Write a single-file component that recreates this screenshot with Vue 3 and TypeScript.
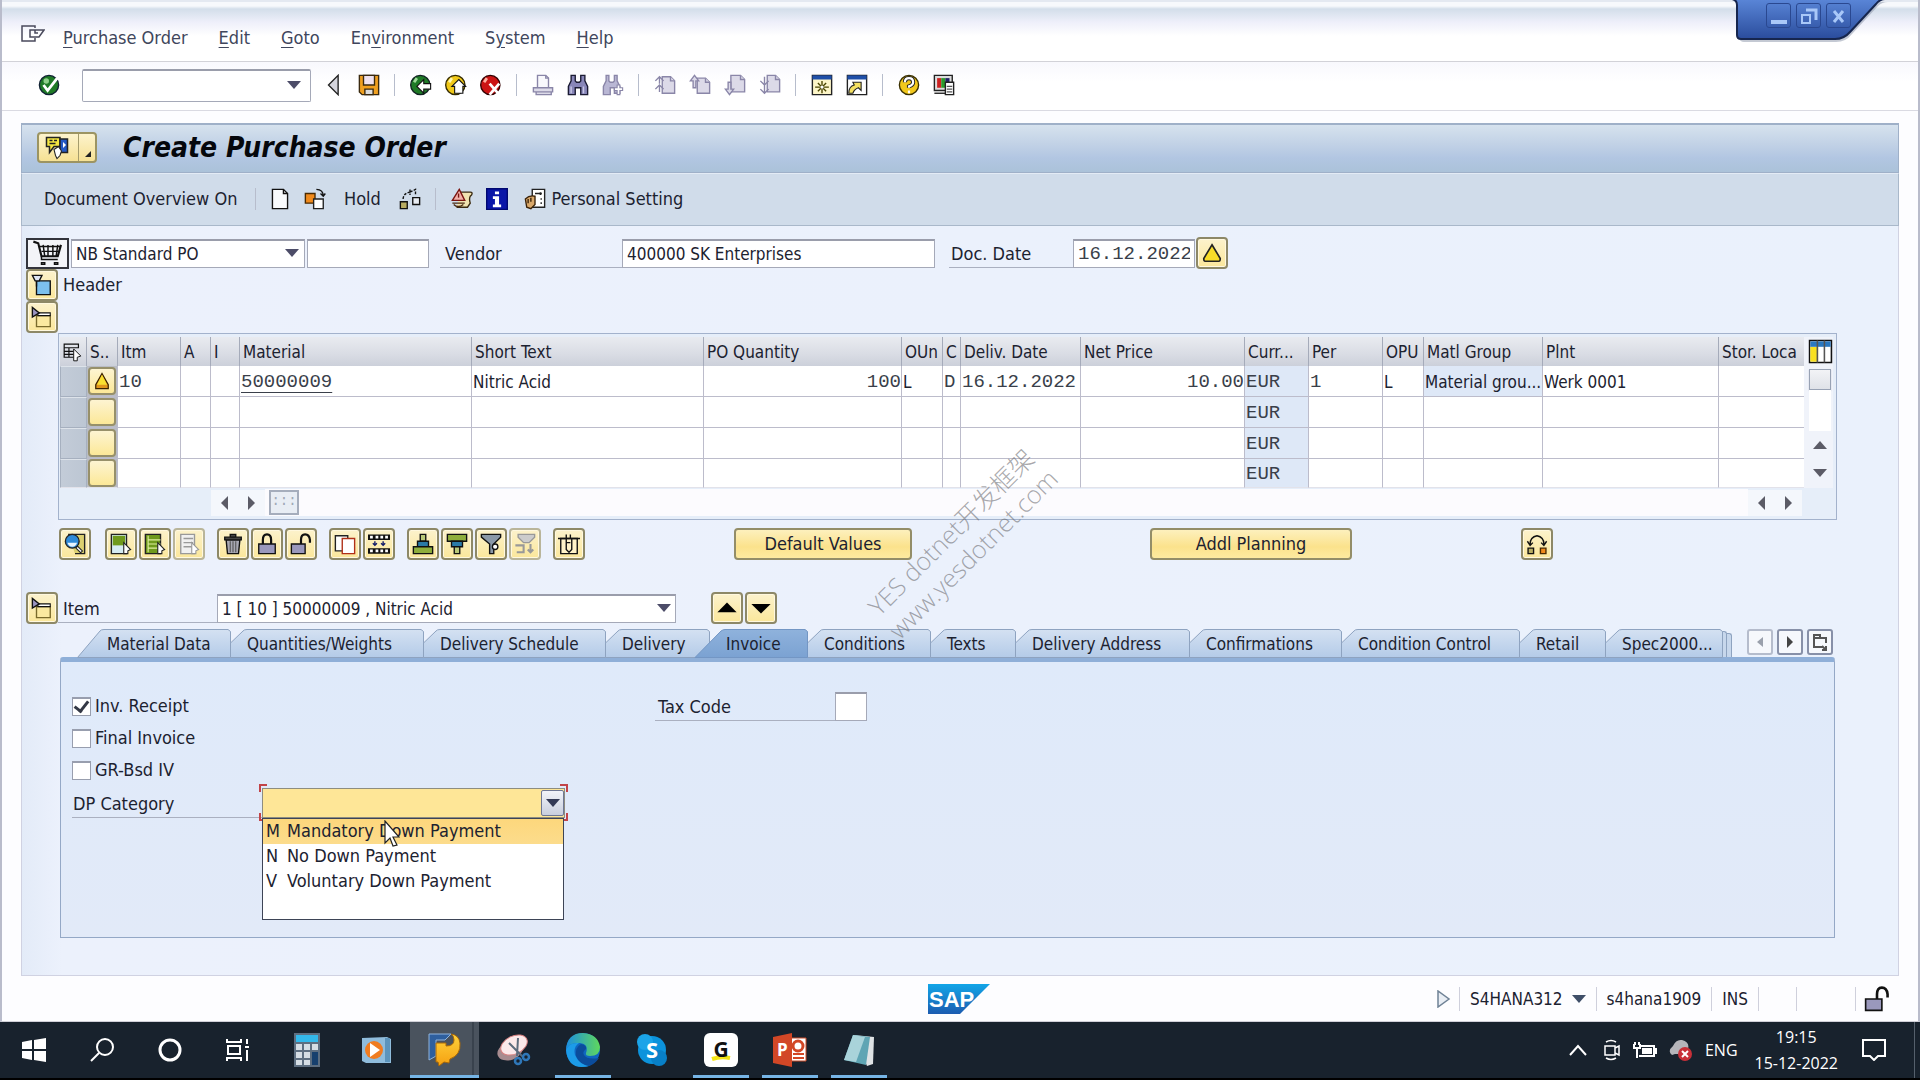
<script setup lang="ts">
import { ref } from 'vue'

interface Tool { icon: string; label: string; off?: boolean }
interface Column { name: string; width?: number }
interface Tab { name: string; width: number }

const g = 'stroke="#8a86a8" fill="#dcdae8"'
const k = 'stroke="#111" fill="none"'

const icons: Record<string, string> = {
  ok: `<circle cx="8" cy="8" r="7" fill="#1f7a26" stroke="#123"/><circle cx="6" cy="5" r="2" fill="#8fd08a"/><path d="M4 8l3 4 7-9" fill="none" stroke="#fff" stroke-width="2"/>`,
  prev: `<path d="M11 1v14L4 8z" fill="#d5d5dd" stroke="#222"/>`,
  save: `<path d="M1 1h14v14H3l-2-2z" fill="#f0a020" stroke="#3a2a10"/><path d="M4 1h8v7H4z" fill="#efe2ef" stroke="#3a2a10"/><path d="M5 11h6v4H5z" fill="#ddd" stroke="#3a2a10"/>`,
  back: `<circle cx="7.500" cy="8" r="7" fill="#1f7a26" stroke="#122"/><path d="M5 3l-2 3" stroke="#9fda9a" stroke-width="2"/><path d="M5 9l5-5v3h5v4h-5v3z" fill="#fff" stroke="#111" stroke-width=".8"/>`,
  exit: `<circle cx="7.500" cy="8" r="7" fill="#f0c818" stroke="#332a00"/><path d="M5 3l-2 3" stroke="#fff7b0" stroke-width="2"/><path d="M10 4l5 5h-2v5H7V9H5z" fill="#fff" stroke="#111" stroke-width=".8"/>`,
  cancel: `<circle cx="7.500" cy="8" r="7" fill="#cc1414" stroke="#300"/><path d="M5 3l-2 3" stroke="#ffb0a0" stroke-width="2"/><path d="M7 7l7 8M14 7l-7 8" stroke="#fff" stroke-width="2"/>`,
  print: `<path d="M4 10V1h6l2 2v7" fill="#f8f8fc" stroke="#8a86a8"/><path d="M10 1v2h2" fill="none" stroke="#8a86a8"/><path d="M1 10h14v3H1zM3 13h11v2H3z" ${g}/>`,
  find: `<path d="M3 1h3v4l1 1h2l1-1V1h3v4l2 4v6h-5v-5H6v5H1V9l2-4z" fill="#8886b8" stroke="#1b1b33"/><path d="M3 9v5M12 9v5" stroke="#c9c8e6"/>`,
  findnext: `<path d="M3 1h2v4l1 1h2l1-1V1h2v4l2 4v5H9v-4H6v5H1V9l2-4z" fill="#b9b7d4" stroke="#8a86a8"/><path d="M11 8h2v2h2v2h-2v3h-2v-3H9v-2h2z" fill="#fff" stroke="#8a86a8" stroke-width=".8"/>`,
  first: `<path d="M6 2h6l3 3v9H6z" ${g}/><path d="M12 2v3h3" ${g}/><path d="M1 5l3-3 3 3M4 2v5M1 11l3-3 3 3M4 8v5" fill="none" stroke="#8a86a8"/>`,
  pageup: `<path d="M6 3h6l3 3v8H6z" ${g}/><path d="M12 3v3h3" ${g}/><path d="M1 5l3-4 3 4H5v5H3V5z" ${g}/>`,
  pagedown: `<path d="M5 1h7l3 3v9H5z" ${g}/><path d="M12 1v3h3" ${g}/><path d="M1 11l3 4 3-4H5V6H3v5z" ${g}/>`,
  last: `<path d="M6 1h6l3 3v9H6z" ${g}/><path d="M12 1v3h3" ${g}/><path d="M1 5l3 3 3-3M4 2v5M1 11l3 3 3-3M4 8v6" fill="none" stroke="#8a86a8"/>`,
  session: `<path d="M1 1h14v14H1z" fill="#fdf6c8" stroke="#222"/><path d="M1 1h14v3H1z" fill="#1f4fa8"/><path d="M8 5v9M3 9.500h10M5 6.500l6 6M11 6.500l-6 6" stroke="#4a4500"/><circle cx="8" cy="9.500" r="1.200" fill="#fff"/>`,
  shortcut: `<path d="M1 1h14v14H1z" fill="#fff" stroke="#222"/><path d="M1 1h14v3H1z" fill="#1f4fa8"/><path d="M2 14q0-5 4-6L5 6h6v6L9 10q-3 1-4 4z" fill="#f4e060" stroke="#222" stroke-width=".8"/>`,
  help: `<circle cx="8" cy="8" r="7" fill="#f2c81c" stroke="#3a3000"/><path d="M5 6q0-3 3-3t3 3q0 2-3 3v1" fill="none" stroke="#222" stroke-width="3"/><path d="M5 6q0-3 3-3t3 3q0 2-3 3v1M8 12v2" fill="none" stroke="#fff" stroke-width="1.600"/>`,
  layout: `<path d="M1 1h13v11H1z" fill="#ddd" stroke="#222"/><path d="M3 3h3v7H3z" fill="#c22"/><path d="M6 3h3v7H6z" fill="#2a9a2a"/><path d="M9 3h3v7H9z" fill="#226"/><path d="M1 14h8" stroke="#222"/><path d="M9 6h6v9H9z" fill="#fff" stroke="#222"/><path d="M10 9h4M10 11h4M10 13h4" stroke="#555" stroke-width=".8"/>`,
  services: `<path d="M1 1h9v6H6l-3 4V7H1z" fill="#f5e642" stroke="#222"/><path d="M3 3h2M6 3h2M3 5h4" stroke="#222"/><path d="M10 2h5v9h-5z" fill="#2459c4" stroke="#222"/><path d="M12 4v4l2-2z" fill="#fff"/><path d="M6 9l3-2 2 3-1 3-2 2-1-2z" fill="#fff" stroke="#222" stroke-width=".7"/>`,
  create: `<path d="M2.500 1h8l3 3v11h-11z" fill="#f8fafc" stroke="#111"/><path d="M10.500 1v3h3" ${k}/>`,
  other: `<path d="M1 4h7v7H1z" fill="#f08a1c" stroke="#4a2a00"/><path d="M7 8h7v7H7z" fill="#fff" stroke="#222"/><path d="M9 1q5 0 5 5M12 4l2 2 1.500-2" ${k}/>`,
  hold: `<path d="M1 10h5v5H1z" fill="#b9ad62" stroke="#111"/><path d="M10 7h5v5h-5z" fill="#e8ecf2" stroke="#111"/><path d="M3 8q0-4 5-5M8 1v4M8 3l4-2v4" ${k} stroke-dasharray="2 1"/>`,
  check: `<path d="M7 3h7q2 0 1 2l-1 1q-1 2 0 5l-2 3H4" fill="#f1e3b0" stroke="#3a2a10"/><path d="M6 1l4 8H1z" fill="#f2b0a8" stroke="#7a1410"/><path d="M5.500 4v3" stroke="#7a1410"/><path d="M2 12q3 3 7 0M1 11h9" fill="none" stroke="#4a2a10"/>`,
  info: `<path d="M.5.5h15v15H.5z" fill="#0a16a8" stroke="#000870"/><path d="M6.500 2.500h3v2h-3zM5 6h4.500v6H11v2H5v-2h1.500V8H5z" fill="#fff"/>`,
  personal: `<path d="M6 1h9v13H6z" fill="#fff" stroke="#222"/><path d="M8 4h5M12 3v2M12 8h1M12 11h1" stroke="#222" stroke-width="1.200"/><path d="M1 8q3-3 7-2v6l-3 3-3-1z" fill="#d9a86a" stroke="#3a2208"/><path d="M3 8v3M5 7v3" stroke="#3a2208"/>`,
  cart: `<path d="M1 1l3 1 2 8h10l2-7" ${k} stroke-width="1.300"/><path d="M5 4h13M6 7h11M7 3l1 7M10 3v7M13 3v7M16 3l-1 7M6 10v2h10M6 14h2v1H6zM14 14h2v1h-2z" ${k} stroke-width=".9"/>`,
  expand: `<path d="M4 5h10v10H4z" fill="#7cc0ee" stroke="#111"/><path d="M1 1h7l-2 4H3zM4 5v4" fill="#dfe6f5" stroke="#111"/>`,
  collapse: `<path d="M4 7h10v8H4z" fill="#fbe9a0" stroke="#7a6a2a"/><path d="M5 5h9v2H5z" fill="#fff" stroke="#111" stroke-width=".8"/><path d="M1 1v7l5-3z" fill="#9a94c0" stroke="#111"/>`,
  warn: `<path d="M8 2l6 10q0 2-1 2H3q-1 0-1-2z" fill="#f8dc28" stroke="#222" stroke-width="1.200"/>`,
  warnsel: `<path d="M8 2l5 9v3H3v-3z" fill="#e0961c" stroke="#3a2200"/><path d="M8 3l4 8H4z" fill="#f8e030"/>`,
  detail: `<path d="M3 1h12v14H8" fill="#dcd070" stroke="#222"/><circle cx="6" cy="6" r="5" fill="#2f8ad8" stroke="#222"/><path d="M2.500 7h7q-1 3-3.500 3T2.500 7" fill="#e8f4ff"/><path d="M9 10l4 4" stroke="#222" stroke-width="2.600"/><path d="M9.500 10.500l3 3" stroke="#fff"/>`,
  selall: `<path d="M1 1h11v14H1z" fill="#d6ecf2" stroke="#222"/><path d="M2 2h9v7H2z" fill="#6f9a1c"/><path d="M10 7l5 5-2 1v2h-3z" fill="#fff" stroke="#222" stroke-width=".8"/>`,
  selblock: `<path d="M1 1h11v14H1z" fill="#6f9a1c" stroke="#222"/><path d="M3 5h9M3 8h9M3 11h9M3 2v12" stroke="#e0f0a0" stroke-width=".8"/><path d="M10 7l5 5-2 1v2h-3z" fill="#fff" stroke="#222" stroke-width=".8"/>`,
  deselect: `<path d="M2 1h10v14H2z" fill="#f0f0f0" stroke="#999"/><path d="M4 4h7M4 7h7M4 10h6" stroke="#999"/><path d="M10 7l5 5-2 1v2h-3z" fill="#fff" stroke="#999" stroke-width=".8"/>`,
  trash: `<path d="M3 5h10l-1 10H4z" fill="#a8a8b4" stroke="#111"/><path d="M6 6v8M8 6v8M10 6v8" stroke="#555" stroke-width=".8"/><path d="M2 3h12v2H2zM6 1h4v2H6z" fill="#444" stroke="#111"/>`,
  lock: `<path d="M2 8h12v7H2z" fill="#9a98bc" stroke="#111"/><path d="M5 8V5q0-4 3-4t3 4v3" ${k} stroke-width="1.600"/>`,
  unlock: `<path d="M1 8h10v7H1z" fill="#9a98bc" stroke="#111"/><path d="M8 8V5q0-4 3-4t3.500 4v2" ${k} stroke-width="1.600"/>`,
  copy: `<path d="M1 2h9v11H1z" fill="#fff" stroke="#222"/><path d="M6 4h9v11H6z" fill="#fff" stroke="#b03018"/>`,
  fill: `<path d="M0 1h16v4H0zM0 11h16v4H0z" fill="#111"/><path d="M1.500 2h2v2h-2zM5.500 2h2v2h-2zM9 2h2v2H9zM12.500 2h2v2h-2zM1.500 12h2v2h-2zM5.500 12h2v2h-2zM9 12h2v2H9zM12.500 12h2v2h-2z" fill="#fff"/><path d="M5 6v3M3.500 7.500L5 9l1.500-1.500M11 6v3M9.500 7.500L11 9l1.500-1.500" fill="none" stroke="#111b6a"/>`,
  asc: `<path d="M6 1h4v5H6z" fill="#b9c878" stroke="#111"/><path d="M4 6h8v4H4z" fill="#2a7aa8" stroke="#111"/><path d="M1 10h14v5H1z" fill="#8fae3c" stroke="#111"/>`,
  desc: `<path d="M1 1h14v5H1z" fill="#8fae3c" stroke="#111"/><path d="M4 6h8v4H4z" fill="#2a7aa8" stroke="#111"/><path d="M6 10h4v5H6z" fill="#b9c878" stroke="#111"/>`,
  filter: `<path d="M1 1h14v2l-5 5v7H7V8L1 3z" fill="#8a98a8" stroke="#111"/><circle cx="11" cy="10" r="2" fill="#fff" stroke="#111"/>`,
  nofilter: `<path d="M3 1h12v2l-4 4H7L3 3z" fill="#ccc" stroke="#999"/><path d="M1 9h6v5H2M12 8v6M10 12l2 2 2-2" fill="none" stroke="#999" stroke-width="1.500"/>`,
  basket: `<path d="M2 4h12v11H2z" fill="#fff3c8" stroke="#111"/><path d="M0 4h16M6 1v6M9 1v3M6 7l3 0M6 7v5l2 2 2-2V4" ${k}/>`,
  swap: `<path d="M1.500 11h4v4h-4z" fill="#b9ad62" stroke="#111"/><path d="M10.500 11h4v4h-4z" fill="#f08a1c" stroke="#4a2a00"/><path d="M3 8q0-5 5-6 5 1 5 6M1 6l2 3 2-2M15 6l-2 3-2-2" ${k}/>`,
  columns: `<path d="M1 1h14v14H1z" fill="#fff" stroke="#111"/><path d="M1.500 5h5v9.500h-5z" fill="#f8e020"/><path d="M1.500 1.500h13V5h-13z" fill="#2a78c0"/><path d="M6 1v14M10.500 1v14" stroke="#555"/>`,
  rowsel: `<path d="M1 1h12v3H1zM1 4v8h8M1 7h8M1 9.500h8M5 4v8" ${k}/><path d="M9 5l6 6-3 1v3H9z" fill="#fff" stroke="#111" stroke-width=".8"/>`
}

const tools: (Tool | null)[] = [
  { icon: 'prev', label: 'Previous commands' }, { icon: 'save', label: 'Save' }, null,
  { icon: 'back', label: 'Back' }, { icon: 'exit', label: 'Exit' }, { icon: 'cancel', label: 'Cancel' }, null,
  { icon: 'print', label: 'Print' }, { icon: 'find', label: 'Find' }, { icon: 'findnext', label: 'Find next' }, null,
  { icon: 'first', label: 'First page' }, { icon: 'pageup', label: 'Previous page' },
  { icon: 'pagedown', label: 'Next page' }, { icon: 'last', label: 'Last page' }, null,
  { icon: 'session', label: 'New session' }, { icon: 'shortcut', label: 'Create shortcut' }, null,
  { icon: 'help', label: 'Help' }, { icon: 'layout', label: 'Customize layout' }
]

const menus: [string, string, string][] = [
  ['', 'P', 'urchase Order'], ['', 'E', 'dit'], ['', 'G', 'oto'],
  ['En', 'v', 'ironment'], ['S', 'y', 'stem'], ['', 'H', 'elp']
]

const columns: Column[] = [
  { name: 'Itm', width: 63 }, { name: 'A', width: 30 }, { name: 'I', width: 29 },
  { name: 'Material', width: 232 }, { name: 'Short Text', width: 232 }, { name: 'PO Quantity', width: 198 },
  { name: 'OUn', width: 41 }, { name: 'C', width: 18 }, { name: 'Deliv. Date', width: 120 },
  { name: 'Net Price', width: 164 }, { name: 'Curr...', width: 64 }, { name: 'Per', width: 74 },
  { name: 'OPU', width: 41 }, { name: 'Matl Group', width: 119 }, { name: 'Plnt', width: 176 },
  { name: 'Stor. Loca' }
]
const rows: string[][] = [
  ['10', '', '', '50000009', 'Nitric Acid', '100', 'L', 'D', '16.12.2022', '10.00', 'EUR', '1', 'L', 'Material grou...', 'Werk 0001', ''],
  ...Array.from({ length: 3 }, () => ['', '', '', '', '', '', '', '', '', '', 'EUR', '', '', '', '', ''])
]
const mono = [0, 3, 5, 7, 8, 9, 10, 11]
const right = [5, 9]

const gridTools: Tool[][] = [
  [{ icon: 'detail', label: 'Details' }],
  [{ icon: 'selall', label: 'Select all' }, { icon: 'selblock', label: 'Select block' }, { icon: 'deselect', label: 'Deselect all', off: true }],
  [{ icon: 'trash', label: 'Delete' }, { icon: 'lock', label: 'Block' }, { icon: 'unlock', label: 'Unblock' }],
  [{ icon: 'copy', label: 'Copy' }, { icon: 'fill', label: 'Duplicate values' }],
  [{ icon: 'asc', label: 'Sort ascending' }, { icon: 'desc', label: 'Sort descending' }, { icon: 'filter', label: 'Filter' }, { icon: 'nofilter', label: 'Delete filter', off: true }],
  [{ icon: 'basket', label: 'Purchase basket' }]
]

const tabs: Tab[] = [
  { name: 'Material Data', width: 153 }, { name: 'Quantities/Weights', width: 193 },
  { name: 'Delivery Schedule', width: 182 }, { name: 'Delivery', width: 104 },
  { name: 'Invoice', width: 98 }, { name: 'Conditions', width: 123 }, { name: 'Texts', width: 85 },
  { name: 'Delivery Address', width: 174 }, { name: 'Confirmations', width: 152 },
  { name: 'Condition Control', width: 178 }, { name: 'Retail', width: 86 }, { name: 'Spec2000...', width: 117 }
]
const active = ref('Invoice')

function tabShape(t: Tab, i: number): string {
  const w = t.width
  if (t.name === active.value) return `M-14 28.500L12 2Q14 .5 16 .5H${w - 2}L${w}.5 2.500V28.500z`
  if (i === 0) return `M.5 28.500L23 2Q24 .5 27 .5H${w - 2}L${w}.5 2.500V28.500z`
  return `M.5 28.500V14L13 2Q14 .5 17 .5H${w - 2}L${w}.5 2.500V28.500z`
}

const receipt = ref(true)
const finalInvoice = ref(false)
const grBased = ref(false)
const categories = [['M', 'Mandatory Down Payment'], ['N', 'No Down Payment'], ['V', 'Voluntary Down Payment']]
</script>

<template>
  <div class="screen">
    <div class="window">
      <div class="wincontrols">
        <svg class="wcshape" width="160" height="48" viewBox="0 0 160 48" aria-hidden="true">
          <defs><linearGradient id="wc" x2="0" y2="1"><stop offset="0" stop-color="#5a86d8" /><stop offset="1" stop-color="#2a4c9c" /></linearGradient></defs>
          <path d="M2 2q5 0 5 6v31q1 4 5 4h92q10 0 16-8l26-28q4-4 10-4z" fill="#8a93a8" opacity=".5" />
          <path d="M0 0q5 1 5 6v30q0 4 4 4h94q9 0 15-7l26-28q4-5 9-5z" fill="url(#wc)" stroke="#16264e" stroke-width="2" />
        </svg>
        <button aria-label="Minimize"><svg width="22" height="22"><path d="M3 17h16" stroke="#a9c8f8" stroke-width="4" /></svg></button>
        <button aria-label="Restore"><svg width="22" height="22"><path d="M8 5h10v10" fill="none" stroke="#a9c8f8" stroke-width="3" /><path d="M4 10h8v8H4z" fill="none" stroke="#a9c8f8" stroke-width="2" /></svg></button>
        <button aria-label="Close"><svg width="22" height="22"><path d="M6 6l9 11M15 6L6 17" stroke="#a9c8f8" stroke-width="3" /></svg></button>
      </div>

      <nav class="menubar">
        <svg width="24" height="17" viewBox="0 0 24 17" fill="none" stroke="#4a4a5c" stroke-width="1.500" aria-hidden="true"><path d="M14 3V1H1v15h13v-3M9 5h14l-5 7H9zM14 5v3h3" /></svg>
        <a v-for="m in menus" :key="m[2]" href="#">{{ m[0] }}<u>{{ m[1] }}</u>{{ m[2] }}</a>
      </nav>

      <div class="stdbar">
        <button class="tool" aria-label="Enter"><svg viewBox="0 0 16 16" v-html="icons.ok" /></button>
        <span class="pick cmd">
          <input type="text" aria-label="Command field">
          <svg class="arrow" width="14" height="8"><path d="M0 0h14L7 8z" /></svg>
        </span>
        <template v-for="(t, i) in tools" :key="i">
          <button v-if="t" class="tool" :aria-label="t.label"><svg viewBox="0 0 16 16" v-html="icons[t.icon]" /></button>
          <i v-else class="sep" />
        </template>
      </div>

      <main class="panel">
        <header class="title">
          <button class="services" aria-label="Services for object">
            <svg viewBox="0 0 16 16" v-html="icons.services" /><i /><svg class="corner" width="6" height="6"><path d="M6 0v6H0z" fill="#222" /></svg>
          </button>
          <h1>Create Purchase Order</h1>
        </header>

        <div class="appbar">
          <button class="text">Document Overview On</button>
          <i class="sep" />
          <button class="tool" aria-label="Create"><svg viewBox="0 0 16 16" v-html="icons.create" /></button>
          <button class="tool" aria-label="Other purchase order"><svg viewBox="0 0 16 16" v-html="icons.other" /></button>
          <button class="text hold">Hold</button>
          <button class="tool" aria-label="Switch"><svg viewBox="0 0 16 16" v-html="icons.hold" /></button>
          <i class="sep" />
          <button class="tool" aria-label="Check"><svg viewBox="0 0 16 16" v-html="icons.check" /></button>
          <button class="tool" aria-label="Messages"><svg viewBox="0 0 16 16" v-html="icons.info" /></button>
          <button class="text personal"><svg viewBox="0 0 16 16" v-html="icons.personal" />Personal Setting</button>
        </div>

        <div class="body">
          <div class="row po">
            <button class="cart" aria-label="Shopping cart"><svg width="34" height="26" viewBox="0 0 20 16" v-html="icons.cart" /></button>
            <span class="pick type">
              <select aria-label="Order type"><option>NB Standard PO</option></select>
              <svg class="arrow" width="14" height="8"><path d="M0 0h14L7 8z" /></svg>
            </span>
            <input class="field number" type="text" aria-label="Purchase order number">
            <label class="lbl vendor-l" for="vendor">Vendor</label>
            <input id="vendor" class="field vendor" type="text" value="400000 SK Enterprises">
            <label class="lbl date-l" for="docdate">Doc. Date</label>
            <input id="docdate" class="field date mono" type="text" value="16.12.2022">
            <button class="yb" aria-label="Status"><svg viewBox="0 0 16 16" v-html="icons.warn" /></button>
          </div>
          <div class="row"><button class="yb" aria-label="Expand header"><svg viewBox="0 0 16 16" v-html="icons.expand" /></button><span class="sect">Header</span></div>
          <div class="row"><button class="yb" aria-label="Collapse items"><svg viewBox="0 0 16 16" v-html="icons.collapse" /></button></div>

          <div class="gridbox">
            <div class="gridtop">
              <table>
                <colgroup>
                  <col style="width: 27px"><col style="width: 31px">
                  <col v-for="c in columns" :key="c.name" :style="c.width ? { width: c.width + 'px' } : {}">
                </colgroup>
                <thead>
                  <tr>
                    <th><svg class="rs" viewBox="0 0 16 16" v-html="icons.rowsel" /></th>
                    <th>S..</th>
                    <th v-for="c in columns" :key="c.name">{{ c.name }}</th>
                  </tr>
                </thead>
                <tbody>
                  <tr v-for="(r, ri) in rows" :key="ri">
                    <td class="rowhead" />
                    <td class="stat"><button aria-label="Item status"><svg v-if="ri === 0" viewBox="0 0 16 16" v-html="icons.warnsel" /></button></td>
                    <td v-for="(c, ci) in r" :key="ci" :class="{ mono: mono.includes(ci), right: right.includes(ci), ro: ci === 10 || (ci === 13 && c) }"><u v-if="ci === 3 && c">{{ c }}</u><template v-else>{{ c }}</template></td>
                  </tr>
                </tbody>
              </table>
              <div class="vbar">
                <button class="cfg" aria-label="Configure columns"><svg viewBox="0 0 16 16" v-html="icons.columns" /></button>
                <i class="thumb" /><i class="track" />
                <button class="sa" aria-label="Scroll up"><svg width="14" height="8"><path d="M0 8h14L7 0z" /></svg></button>
                <button class="sa" aria-label="Scroll down"><svg width="14" height="8"><path d="M0 0h14L7 8z" /></svg></button>
              </div>
            </div>
            <div class="hbar">
              <button class="sh" aria-label="Scroll left"><svg width="7" height="14"><path d="M7 0v14L0 7z" /></svg></button>
              <button class="sh" aria-label="Scroll right"><svg width="7" height="14"><path d="M0 0v14l7-7z" /></svg></button>
              <div class="htrack"><i>:::</i></div>
              <button class="sh" aria-label="Page left"><svg width="7" height="14"><path d="M7 0v14L0 7z" /></svg></button>
              <button class="sh" aria-label="Page right"><svg width="7" height="14"><path d="M0 0v14l7-7z" /></svg></button>
            </div>
          </div>

          <div class="gtools">
            <div v-for="(grp, gi) in gridTools" :key="gi" class="grp">
              <button v-for="t in grp" :key="t.icon" class="yb" :class="{ off: t.off }" :aria-label="t.label"><svg viewBox="0 0 16 16" v-html="icons[t.icon]" /></button>
            </div>
            <button class="wide defaults">Default Values</button>
            <button class="wide planning">Addl Planning</button>
            <button class="yb swap" aria-label="Substitute"><svg viewBox="0 0 16 16" v-html="icons.swap" /></button>
          </div>

          <div class="row item">
            <button class="yb" aria-label="Collapse item details"><svg viewBox="0 0 16 16" v-html="icons.collapse" /></button>
            <label class="lbl item-l" for="item">Item</label>
            <span class="pick itemsel">
              <select id="item"><option>1 [ 10 ] 50000009 , Nitric Acid</option></select>
              <svg class="arrow" width="14" height="8"><path d="M0 0h14L7 8z" /></svg>
            </span>
            <button class="yb up" aria-label="Previous item"><svg viewBox="0 0 16 16"><path d="M1 11h14L8 4z" /></svg></button>
            <button class="yb" aria-label="Next item"><svg viewBox="0 0 16 16"><path d="M1 5h14l-7 7z" /></svg></button>
          </div>

          <div class="tabs" role="tablist">
            <svg width="0" height="0" aria-hidden="true"><defs>
              <linearGradient id="tab" x2="0" y2="1"><stop offset="0" stop-color="#d4e1f2" /><stop offset="1" stop-color="#b4cbe8" /></linearGradient>
              <linearGradient id="tabon" x2="0" y2="1"><stop offset="0" stop-color="#8fb2dc" /><stop offset="1" stop-color="#7ba2d2" /></linearGradient>
            </defs></svg>
            <button v-for="(t, i) in tabs" :key="t.name" role="tab" class="tab" :class="{ on: t.name === active, lead: i === 0 }" :aria-selected="t.name === active" :style="{ width: t.width + 'px' }" @click="active = t.name">
              <svg :width="t.width" height="29" aria-hidden="true"><path :d="tabShape(t, i)" :fill="t.name === active ? 'url(#tabon)' : 'url(#tab)'" :stroke="t.name === active ? '#7396c4' : '#8ea3c0'" /></svg>
              <span>{{ t.name }}</span>
            </button>
            <i class="stack" /><i class="stack low" />
            <div class="tabnav">
              <button class="dim" aria-label="Previous tabs"><svg width="6" height="10"><path d="M6 0v10L0 5z" /></svg></button>
              <button aria-label="Next tabs"><svg width="6" height="12"><path d="M0 0v12l6-6z" /></svg></button>
              <button aria-label="Tab list"><svg width="18" height="18" fill="none" stroke="#555" stroke-width="2"><path d="M11 14H3V5h12v5M3 4V2h6v3M15 17l-4-4M15 13v4h-4" /></svg></button>
            </div>
          </div>

          <section class="sheet">
            <div class="line">
              <label class="chk"><input v-model="receipt" type="checkbox">Inv. Receipt</label>
              <label class="lbl tax-l" for="tax">Tax Code</label>
              <input id="tax" class="field tax" type="text">
            </div>
            <div class="line"><label class="chk"><input v-model="finalInvoice" type="checkbox">Final Invoice</label></div>
            <div class="line"><label class="chk"><input v-model="grBased" type="checkbox">GR-Bsd IV</label></div>
            <div class="line">
              <label class="lbl dp-l" for="dp">DP Category</label>
              <div class="dp">
                <i class="c tl" /><i class="c tr" /><i class="c bl" /><i class="c br" />
                <select id="dp"><option value="" /><option v-for="c in categories" :key="c[0]" :value="c[0]">{{ c[1] }}</option></select>
                <span class="dpbtn"><svg width="14" height="8"><path d="M0 0h14L7 8z" fill="#333a55" /></svg></span>
                <ul role="listbox" aria-label="DP Category">
                  <li v-for="(c, i) in categories" :key="c[0]" role="option" :class="{ hot: i === 0 }"><span>{{ c[0] }}</span>{{ c[1] }}</li>
                </ul>
                <svg class="cursor" width="16" height="28" viewBox="0 0 16 28"><path d="M1 1v22l5-5 3 8 4-1-4-8h6z" fill="#fff" stroke="#222" stroke-width="1.200" /></svg>
              </div>
            </div>
          </section>
        </div>
      </main>

      <footer class="status">
        <svg class="logo" width="62" height="30" viewBox="0 0 62 30" role="img" aria-label="SAP">
          <defs><linearGradient id="sap" x2="0" y2="1"><stop offset="0" stop-color="#12a6e8" /><stop offset="1" stop-color="#1c5cb0" /></linearGradient></defs>
          <path d="M0 0h62L32 30H0z" fill="url(#sap)" /><text x="1" y="23" fill="#fff" font-family="Liberation Sans, sans-serif" font-weight="700" font-size="22">SAP</text>
        </svg>
        <div class="info">
          <svg width="14" height="18"><path d="M1 1v16l11-8z" fill="#e8edf4" stroke="#6f8296" stroke-width="1.500" /></svg>
          <span>S4HANA312<svg class="dd" width="14" height="8"><path d="M0 0h14L7 8z" fill="#3f4f68" /></svg></span>
          <span>s4hana1909</span>
          <span>INS</span>
          <span class="e1" /><span class="e2" />
          <span class="lk"><svg width="26" height="26" viewBox="0 0 16 16" v-html="icons.unlock" /></span>
        </div>
      </footer>
      <div class="watermark">YES dotnet开发框架<br>www.yesdotnet.com</div>
    </div>

    <div class="taskbar">
      <button class="sys" aria-label="Start"><svg width="24" height="24"><path d="M0 4l10-2v9H0zM12 2l12-2v11H12zM0 13h10v9L0 20zM12 13h12v11l-12-2z" fill="#fff" /></svg></button>
      <button class="sys" aria-label="Search"><svg width="24" height="24" fill="none" stroke="#fff" stroke-width="2"><circle cx="15" cy="9" r="8" /><path d="M9 15l-8 8" /></svg></button>
      <button class="sys" aria-label="Cortana"><svg width="24" height="24" fill="none" stroke="#fff" stroke-width="3"><circle cx="12" cy="12" r="10" /></svg></button>
      <button class="sys" aria-label="Task view"><svg width="24" height="24" fill="none" stroke="#fff" stroke-width="2"><path d="M1 1v3h14V1M2 8h12v8H2zM1 23v-3h14v3M21 1v5M21 12v11M19 9h4" /></svg></button>
      <button class="app" aria-label="Calculator"><svg width="26" height="34"><path d="M0 0h26v34H0z" fill="#5d6e80" /><path d="M2 2h22v7H2z" fill="#33b8ea" /><path d="M2 11h6v6H2zM10 11h6v6h-6zM18 11h6v6h-6zM2 19h6v6H2zM10 19h6v6h-6zM2 27h6v5H2zM10 27h6v5h-6z" fill="#d5dde4" /><path d="M18 19h6v13h-6z" fill="#17406e" /></svg></button>
      <button class="app" aria-label="Media player"><svg width="30" height="28"><path d="M1 2l25-1 4 2v24H5l-4-2z" fill="#8fbcdc" /><path d="M24 2h5v24h-5z" fill="#5c94bc" /><circle cx="13" cy="14" r="9" fill="#f07c20" /><path d="M9 7v14l10-7z" fill="#fff" /></svg></button>
      <button class="app current" aria-label="SAP Logon"><svg width="34" height="34"><defs><linearGradient id="lg" x2="0" y2="1"><stop offset="0" stop-color="#ffd23c" /><stop offset="1" stop-color="#f5a010" /></linearGradient></defs><path d="M1 1h22l-6 6H8v16L1 27z" fill="#2e5f9e" stroke="#8fb4dc" /><path d="M8 10h10v3q8 0 8-6 0-4-3-6 8 1 9 9 1 12-10 16l-1 4-5-1-5 4-1-4H8z" fill="url(#lg)" stroke="#a86808" /></svg></button>
      <button class="app" aria-label="Snipping tool"><svg width="34" height="32"><ellipse cx="13" cy="17" rx="13" ry="9" fill="#a88c90" transform="rotate(-20 13 17)" /><ellipse cx="17" cy="11" rx="14" ry="9" fill="#fbe9ea" stroke="#d88080" transform="rotate(-25 17 11)" /><path d="M12 9l14 14M21 4l-1 18" stroke="#5b6b7c" stroke-width="2" /><circle cx="29" cy="23" r="3" fill="none" stroke="#2f77b8" stroke-width="2.500" /><circle cx="21" cy="27" r="3" fill="none" stroke="#2f77b8" stroke-width="2.500" /></svg></button>
      <button class="app run" aria-label="Edge"><svg width="34" height="34"><defs><linearGradient id="e1" x2="1" y2="0"><stop offset="0" stop-color="#1b8ee0" /><stop offset="1" stop-color="#5fd85c" /></linearGradient></defs><circle cx="17" cy="17" r="17" fill="#0f66c0" /><path d="M0 17Q1 0 17 0q15 1 17 14 0 9-10 9-5 0-4-3 3-9-6-10Q3 9 0 17z" fill="url(#e1)" /><path d="M0 17Q3 9 13 10q-6 4-4 12 4 9 14 11Q2 38 0 17z" fill="#1c9be8" /><path d="M20 16q-4 3-2 6 3 5 15 3-4 6-10 8-10-2-13-10-1-9 5-12 6 1 5 5z" fill="#0b4c9c" /></svg></button>
      <button class="app" aria-label="Skype"><svg width="32" height="34"><circle cx="16" cy="17" r="14" fill="#0c93dc" /><circle cx="9" cy="9" r="8" fill="#1ba4e8" /><circle cx="23" cy="25" r="8" fill="#0880c8" /><text x="16" y="25" text-anchor="middle" fill="#fff" font-family="Open Sans, sans-serif" font-weight="700" font-size="22">S</text></svg></button>
      <button class="app run" aria-label="G application"><svg width="34" height="34"><rect width="34" height="34" rx="6" fill="#fff" /><path d="M8 26q9-3 18-1" fill="none" stroke="#f5e616" stroke-width="4" /><text x="17" y="24" text-anchor="middle" fill="#111" font-family="Open Sans, sans-serif" font-weight="700" font-size="21">G</text></svg></button>
      <button class="app run" aria-label="PowerPoint"><svg width="34" height="34"><path d="M15 5h18v23H15z" fill="#fff" stroke="#c84a28" /><circle cx="25" cy="13" r="5" fill="none" stroke="#d24726" stroke-width="3" /><path d="M20 21h11M20 25h11" stroke="#d24726" stroke-width="2" /><path d="M0 4l19-4v34L0 30z" fill="#d24726" /><text x="4" y="23" fill="#fff" font-family="Open Sans, sans-serif" font-weight="700" font-size="17">P</text></svg></button>
      <button class="app run" aria-label="Notepad"><svg width="34" height="34"><path d="M12 2l20 2-1 27-6 2z" fill="#dfe3e5" /><path d="M11 2l17 2-4 28-22-5z" fill="#5fa5b4" /><path d="M11 2l12 2-9 25-12-2z" fill="#a9d3da" /></svg></button>
      <div class="tray">
        <svg class="chev" width="18" height="12" fill="none" stroke="#fff" stroke-width="2"><path d="M1 11l8-9 8 9" /></svg>
        <svg width="18" height="22" fill="none" stroke="#fff" stroke-width="1.500"><path d="M2 7h10v9H2zM12 9l4-2v9l-4-2M3 3q5-3 10 0M3 19q5 3 10 0" /></svg>
        <svg width="24" height="18" fill="none" stroke="#fff" stroke-width="2"><path d="M8 5h13v10H6M21 8h2v4h-2M4 8v9M1 3v4h6V3M2 1v3M6 1v3" /><path d="M9 7h10v6H9z" fill="#fff" stroke="none" /></svg>
        <svg width="24" height="22"><path d="M3 16q-5-4 1-9 3-7 9-6 8 2 6 9v5H6z" fill="#b5b5ba" /><circle cx="16" cy="15" r="7" fill="#c83038" /><path d="M13 12l6 6M19 12l-6 6" stroke="#fff" stroke-width="2" /></svg>
        <span>ENG</span>
        <span class="clock">19:15<br>15-12-2022</span>
        <svg width="24" height="22" fill="none" stroke="#fff" stroke-width="2"><path d="M1 1h22v16h-7l-4 4-4-4H1z" /></svg>
        <i />
      </div>
    </div>
  </div>
</template>

<style>
body { margin: 0; background: #000; }
</style>

<style scoped>
* { box-sizing: border-box; }
.screen, button, input, select { font: 17px/24px "DejaVu Sans Condensed", "DejaVu Sans", sans-serif; color: #1c2230; }
.screen { min-height: 100vh; display: flex; flex-direction: column; overflow: hidden; }
button { padding: 0; border: 0; background: none; display: flex; align-items: center; justify-content: center; flex: none; white-space: nowrap; }
svg { display: block; flex: none; }
.menubar, .text, .lbl, .chk, .sect, .wide, ul { font-size: 18px; }
.mono { font-family: "Liberation Mono", monospace; font-size: 19px; color: #3a3f4a; }

.window { position: relative; flex: 1; display: flex; flex-direction: column; background: #fdfdff; border: solid #b9bccb; border-width: 0 2px 1px; border-bottom-color: #d0d0d8; }
.wincontrols { position: absolute; top: -1px; right: 26px; width: 160px; height: 48px; display: flex; gap: 5px; padding: 4px 0 0 34px; }
.wcshape { position: absolute; left: 0; top: 0; }
.wincontrols button { position: relative; width: 25px; height: 25px; border: 1px solid #2a4890; border-radius: 3px; }

.menubar { height: 62px; padding: 12px 0 0 19px; display: flex; align-items: center; border-top: 2px solid #e4e9f1; background: linear-gradient(#f7f9fc 0 4px, #d3deea 7px, #eeeffa 20px, #fff 34px); border-bottom: 1px solid #d2d2d8; }
.menubar svg { margin: 0 18px 8px 0; }
.menubar a { color: #40465c; text-decoration: none; margin-right: 31px; }
.menubar u { text-underline-offset: 3px; }
.stdbar { height: 49px; display: flex; align-items: center; padding: 0 0 2px 29px; background: linear-gradient(#f8f8fd, #fff 20px); border-bottom: 1px solid #dadae2; }
.tool { width: 35px; height: 30px; }
.tool svg, .yb svg, .services svg, .personal svg { width: 22px; height: 22px; }
.sep { flex: none; width: 17px; height: 22px; background: linear-gradient(#b7bdcc, #b7bdcc) 8px 0 / 1px 100% no-repeat; }
.pick { position: relative; display: flex; flex: none; }
.pick select, .pick input, .field { appearance: none; width: 100%; height: 29px; margin: 0; padding: 0 4px; background: #fff; border: 1px solid #a5a9b8; border-top: 2px solid #9a9dab; border-radius: 0; outline: 0; }
.arrow { position: absolute; right: 10px; top: 50%; margin-top: -4px; fill: #4c4c68; }
.cmd { width: 229px; margin: 0 5px 0 16px; }
.cmd input { height: 33px; border-radius: 2px; }

.panel { flex: 1; display: flex; flex-direction: column; margin: 12px 19px 0; background: linear-gradient(90deg, #e3ebf8, #ecf1fc 40px, #eaf1fc); border: 1px solid #d0d2e2; border-top: 0; }
.title { height: 50px; display: flex; align-items: center; padding: 0 0 2px 15px; background: linear-gradient(#d6e2ee, #c2d2e6 40%, #b2c6e2 70%, #abc2d9); border: 1px solid #9fb0c8; border-width: 2px 1px 1px; margin: 0 -1px; }
.services { width: 60px; height: 31px; justify-content: flex-start; padding-left: 5px; border: 2px solid #9c9462; border-radius: 4px; background: linear-gradient(#fdf3cc, #f6e194); position: relative; }
.services svg:first-child { width: 26px; height: 24px; }
.services i { width: 1px; height: 100%; background: #a59c6c; margin-left: 8px; }
.services .corner { position: absolute; width: 6px; height: 6px; right: 4px; bottom: 4px; }
h1 { margin: 0 0 0 26px; font-size: 28px; line-height: 32px; font-weight: 700; font-style: italic; color: #05070c; }
.appbar { height: 53px; display: flex; align-items: center; padding: 0 0 2px 22px; background: #d0dcea; border: 1px solid #a9b8ca; border-top-color: #e3ebf5; margin: 0 -1px; }
.appbar .text { color: #1c2230; }
.appbar .sep { margin: 0 -2px 0 10px; }
.appbar .tool + .sep { margin: 0; }
.hold { width: 60px; }
.personal { margin-left: 10px; gap: 5px; }

.body { flex: 1; display: flex; flex-direction: column; padding: 11px 61px 37px 4px; }
.row { display: flex; align-items: center; height: 32px; flex: none; }
.yb { width: 32px; height: 32px; border: 2px solid #8d8867; border-radius: 4px; background: linear-gradient(#fcf2cc, #fbe79b); box-shadow: inset 0 0 0 1px #fff8de; }
.yb.off { border-color: #b9b59a; }
.cart { width: 43px; height: 31px; border: 2px solid #33343c; background: #f3f4f8; margin-right: 2px; }
.type { width: 234px; margin-right: 2px; }
.type .arrow { right: 6px; }
.field { flex: none; }
.number { width: 122px; }
.lbl { height: 29px; line-height: 29px; border-bottom: 1px solid #aab0c0; padding-left: 5px; flex: none; }
.vendor-l { width: 182px; margin-left: 11px; }
.vendor { width: 313px; }
.date-l { width: 124px; margin-left: 14px; padding-left: 2px; }
.date { width: 122px; margin-right: 1px; }
.sect { margin-left: 5px; }

.gridbox { margin-left: 32px; border: 1px solid #a3b2cc; padding: 3px 3px 2px 1px; background: #e6eef9; }
.gridtop { display: flex; }
table { flex: 1; width: 100%; table-layout: fixed; border-collapse: separate; border-spacing: 0; background: #fff; }
th { height: 29px; padding: 1px 0 0 3px; text-align: left; font-weight: 400; white-space: nowrap; background: linear-gradient(#e9ebf0, #d9dce4 60%, #ccd0da); border-right: 1px solid #a5abba; }
th:last-child, td:last-child { border-right: 0; }
.rs { width: 19px; height: 19px; }
td { height: 31px; padding: 2px 0 0 1px; white-space: nowrap; border-right: 1px solid #bcbccb; border-bottom: 1px solid #bcbccb; line-height: 24px; }
tr:last-child td { height: 29px; border-bottom-color: #e2e2ea; }
td u { text-underline-offset: 5px; text-decoration-thickness: 1px; }
.right { text-align: right; }
.ro { background: #dee8f7; }
.rowhead { background: linear-gradient(90deg, #c3ccd8, #bcc6d3); border: 1px solid #a6b0bf; border-top-color: #dde3ea; }
td.stat { padding: 0 0 0 1px; background: #b9bcc4; }
.stat button { width: 28px; height: 28px; border: 2px solid #97906a; border-radius: 4px; background: linear-gradient(#fdf4d2, #fce898); }
.stat svg { width: 20px; height: 20px; }
.vbar { width: 29px; padding: 0 0 1px 3px; display: flex; flex-direction: column; align-items: center; background: #f0f3fa; }
.cfg { height: 29px; }
.cfg svg { width: 25px; height: 25px; }
.thumb { width: 22px; height: 21px; margin-top: 3px; border: 1px solid #98a2b4; background: linear-gradient(#f2f3f6, #dfe2e8); box-shadow: 0 1px 1px #b5bac6; }
.track { flex: 1; width: 22px; background: #fff; }
.sa { width: 24px; height: 28px; fill: #5b5b66; }
.hbar { display: flex; align-items: center; height: 29px; padding: 0 31px 0 151px; }
.sh { width: 27px; height: 26px; fill: #5b5b66; background: #f4f7fc; }
.htrack { flex: 1; height: 27px; background: #fcfbfe; }
.htrack i { display: block; width: 30px; height: 25px; margin: 1px 4px; border: 2px solid #a5adbc; background: #e8edf4; color: #9fa8b6; font: 14px/18px "Liberation Mono", monospace; text-align: center; }

.gtools { display: flex; height: 32px; margin: 8px 0 32px 33px; }
.grp { display: flex; gap: 2px; margin-right: 12px; }
.grp:first-child { margin-right: 14px; }
.wide { height: 32px; border: 2px solid #938d68; border-radius: 4px; background: linear-gradient(#fdf0bd, #fbe28c 60%, #fdeaa0); }
.defaults { width: 178px; margin-left: 137px; }
.planning { width: 202px; margin-left: 238px; }
.swap { margin-left: 169px; }

.item-l { width: 159px; }
.itemsel { width: 459px; }
.itemsel .arrow { right: 5px; }
.up { margin: 0 2px 0 35px; }

.tabs { display: flex; height: 28px; flex: none; margin: 5px 0 0 51px; }
.tab { position: relative; height: 28px; justify-content: flex-start; padding: 2px 0 0 17px; }
.tab svg { position: absolute; left: 0; top: 0; overflow: visible; }
.tab span { position: relative; }
.tab.lead { padding-left: 30px; }
.on { z-index: 1; }
.stack { width: 5px; height: 26px; margin-top: 2px; border: 1px solid #8ea3c0; border-width: 1px 1px 0 0; background: #c7d7ec; border-radius: 0 3px 0 0; }
.low { height: 24px; margin-top: 4px; }
.tabnav { display: flex; gap: 4px; margin-left: auto; margin-right: 4px; }
.tabnav button { width: 26px; height: 26px; border: 2px solid #8790a8; border-radius: 3px; background: #f6f8fc; fill: #444; }
.tabnav .dim { border-color: #b5bccc; fill: #9aa0ac; }

.sheet { flex: 1; margin: 0 2px 0 34px; padding: 28px 0 24px 11px; background: linear-gradient(#dfeafa, #e2eaf8); border: 1px solid #94a8c6; border-top: 5px solid #8fafd8; border-radius: 3px 3px 0 0; }
.line { display: flex; align-items: center; height: 32px; }
.line:last-child { height: 34px; }
.chk { width: 583px; display: flex; align-items: center; gap: 4px; }
.chk input { appearance: none; width: 19px; height: 19px; margin: 0; background: #fff; border: 1px solid #989eae; border-top-width: 2px; display: grid; place-items: center; }
.chk input:checked::before { content: ""; width: 6px; height: 11px; margin-top: -3px; border: solid #333845; border-width: 0 3px 3px 0; transform: rotate(38deg); }
.tax-l { width: 180px; padding-left: 3px; }
.tax { width: 32px; }
.dp-l { width: 190px; padding-left: 1px; }
.dp { position: relative; width: 303px; height: 30px; }
.dp select { appearance: none; width: 100%; height: 30px; margin: 0; border: 1px solid #8e8d80; border-radius: 0; background: #fee697; }
.dpbtn { position: absolute; right: 1px; top: 2px; width: 23px; height: 26px; display: grid; place-items: center; border: 1px solid #6f7894; border-radius: 2px; background: linear-gradient(#f2f4f9, #c9cfde); pointer-events: none; }
.c { position: absolute; width: 8px; height: 8px; border: 0 solid #c24448; }
.tl { left: -3px; top: -4px; border-width: 2px 0 0 2px; }
.tr { right: -3px; top: -4px; border-width: 2px 2px 0 0; }
.bl { left: -3px; bottom: -3px; border-width: 0 0 2px 2px; }
.br { right: -3px; bottom: -3px; border-width: 0 2px 2px 0; }
ul { position: absolute; z-index: 2; left: 0; top: 30px; width: 302px; height: 102px; margin: 0; padding: 0; list-style: none; background: #fff; border: 1px solid #3d4456; }
li { display: flex; height: 25px; line-height: 24px; padding-left: 3px; }
li span { width: 21px; }
.hot { background: linear-gradient(#fdd77c, #fcdc8c); }
.cursor { position: absolute; z-index: 3; left: 122px; top: 32px; }

.status { height: 45px; display: flex; align-items: center; position: relative; }
.logo { margin-left: calc(50% - 32px); }
.info { margin-left: auto; margin-right: 28px; display: flex; align-items: center; }
.info > span { height: 24px; display: flex; align-items: center; padding: 0 10px; border-left: 1px solid #cfd0dc; }
.info > svg { margin-right: 8px; }
.info .dd { margin-left: 9px; }
.info .e1 { width: 38px; }
.info .e2 { width: 59px; }
.info .lk { padding: 0 0 0 8px; }

.watermark { position: absolute; z-index: 4; left: 815px; top: 512px; width: 290px; text-align: center; font: 300 25px/31px "Open Sans", "Noto Sans CJK SC", sans-serif; color: rgba(110, 110, 115, .6); transform: rotate(-45deg); pointer-events: none; white-space: nowrap; }

.taskbar { height: 58px; flex: none; display: flex; background: #18222d; border-bottom: 2px solid #000; }
.taskbar button { height: 56px; }
.sys { width: 68px; }
.app { width: 69px; position: relative; }
.current { background: linear-gradient(90deg, #4a535e 0 62px, #39424d 62px 64px, #4a535e 64px); }
.run::after, .current::after { content: ""; position: absolute; left: 7px; right: 6px; bottom: 0; height: 3px; background: #76b5e6; }
.current::after { left: 0; right: 0; }
.tray, .tray span { color: #fff; font: 16px/26px "Open Sans", sans-serif; }
.tray { margin-left: auto; display: flex; align-items: center; gap: 12px; }
.chev { margin-right: 4px; }
.clock { text-align: center; margin: 0 12px 0 5px; }
.tray i { width: 1px; height: 56px; margin: 0 5px 0 16px; background: #55606c; }
</style>
